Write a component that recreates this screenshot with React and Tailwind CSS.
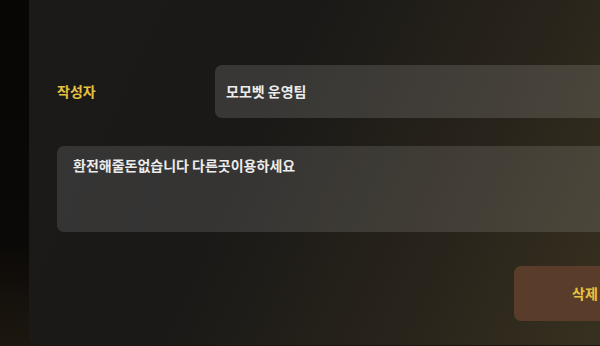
import React from 'react';

const font = { fontFamily: '"Noto Sans CJK KR", "Noto Sans", sans-serif' };

export default function App() {
  return (
    <div
      style={font}
      className="w-[600px] h-[346px] overflow-hidden flex bg-[linear-gradient(180deg,#070605_0%,#0b0907_70%,#1d170f_100%)]"
    >
      <div className="w-[29px] shrink-0" />
      <div className="w-[655px] shrink-0 h-[345px] rounded-bl-[10px] pt-[65px] pl-[28px] pr-[28px] flex flex-col bg-[linear-gradient(115deg,#1b1a19_0%,#1a1917_35%,#29241b_65%,#3d3622_100%)]">
        <div className="flex items-center">
          <div className="w-[158px] shrink-0 text-[14px] font-bold text-[#e2c23f]">작성자</div>
          <div className="flex-1 h-[53px] rounded-[7px] bg-white/[0.13] flex items-center px-[11px] text-[14px] font-semibold text-[#ececec]">
            모모벳 운영팀
          </div>
        </div>
        <div className="mt-[28px] h-[86px] rounded-[7px] bg-white/[0.12] px-[16px] pt-[9px] text-[14px] font-semibold text-[#ececec]">
          환전해줄돈없습니다 다른곳이용하세요
        </div>
        <div className="mt-[34px] flex justify-end">
          <div className="w-[142px] h-[55px] rounded-[7px] bg-[#5a3c2a] flex items-center justify-center text-[14px] font-bold text-[#e6c43d]">
            삭제
          </div>
        </div>
      </div>
    </div>
  );
}
